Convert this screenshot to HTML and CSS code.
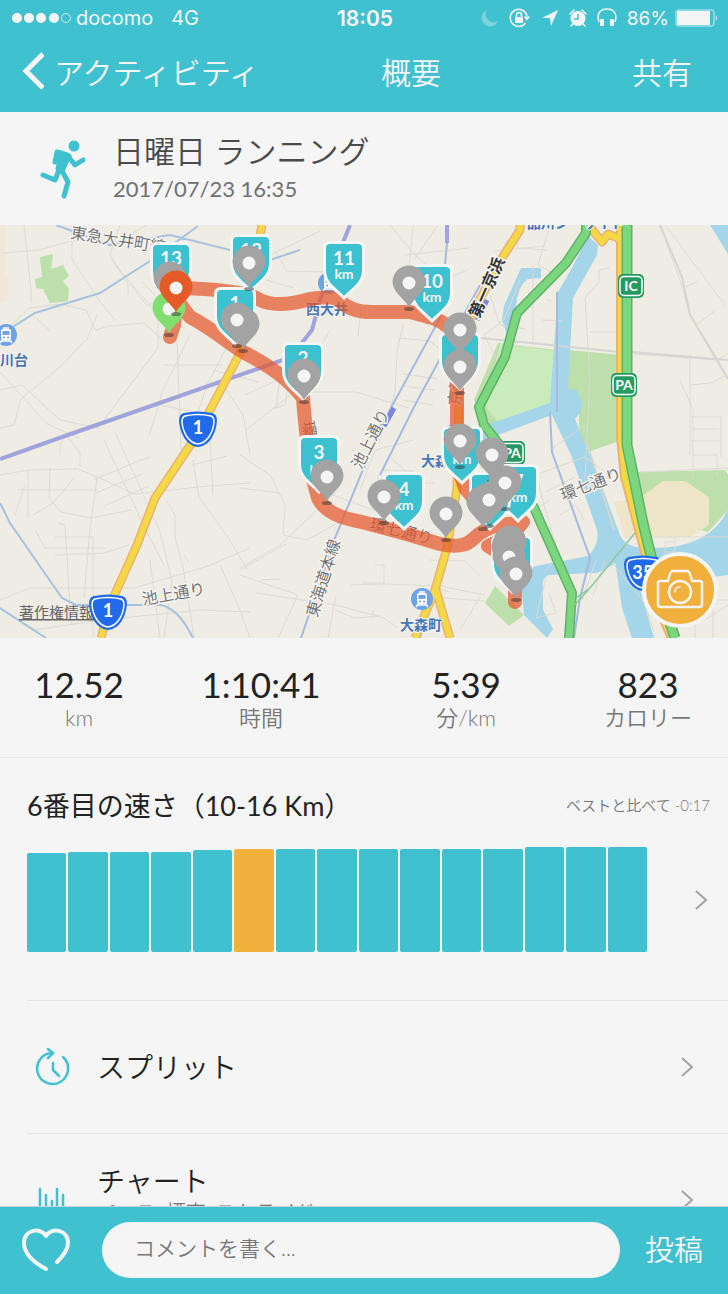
FILE: index.html
```html
<!DOCTYPE html>
<html lang="ja">
<head>
  <meta charset="UTF-8">
  <meta name="viewport" content="width=device-width, initial-scale=1.0">
  <title>概要</title>
  <link rel="stylesheet" href="styles.css">
</head>
<body>
  <div class="app">
    <header class="top">
      <div class="status">
        <div class="status-left">
          <svg width="60" height="12" viewBox="0 0 60 12" fill="#f5f5f5">
            <circle cx="5" cy="6" r="5"/><circle cx="17" cy="6" r="5"/><circle cx="29" cy="6" r="5"/><circle cx="42" cy="6" r="5"/>
            <circle cx="54" cy="6" r="4.5" fill="none" stroke="#c8ecf0" stroke-width="1"/>
          </svg>
          <span class="carrier">docomo</span>
          <span>4G</span>
        </div>
        <div class="clock">18:05</div>
        <div class="status-right">
          <svg width="18" height="18" viewBox="0 0 18 18"><path d="M6 1A8.500 8.500 0 1 0 17 12A8 8 0 0 1 6 1Z" fill="#79d3dd"/></svg>
          <svg width="22" height="20" viewBox="0 0 22 20" fill="none" stroke="#f5f5f5" stroke-width="1.500"><path d="M16.500 15A8.500 8.500 0 1 1 18 8"/><path d="M14.500 8.500h6.500l-3 4z" fill="#f5f5f5" stroke="none"/><rect x="6" y="9" width="8" height="6" rx="1" fill="#f5f5f5" stroke="none"/><path d="M7.500 9V7a2.500 2.500 0 0 1 5 0v2"/></svg>
          <svg width="18" height="18" viewBox="0 0 18 18"><path d="M1 9L17 1L10 17L9 9Z" fill="#f5f5f5"/></svg>
          <svg width="18" height="18" viewBox="0 0 18 18"><circle cx="9" cy="9.500" r="7.500" fill="#f5f5f5"/><path d="M9 5v5H5" fill="none" stroke="#40c1d0" stroke-width="1.500"/><path d="M1 5l4-4M17 5l-4-4M4 15l-2 2M14 15l2 2" stroke="#f5f5f5" stroke-width="1.500" stroke-linecap="round"/></svg>
          <svg width="20" height="20" viewBox="0 0 20 20"><path d="M2 14C-1 5 4 1 10 1S21 5 18 14" fill="none" stroke="#f5f5f5" stroke-width="1.600"/><rect x="3" y="11" width="4" height="7" rx="1" fill="#f5f5f5"/><rect x="13" y="11" width="4" height="7" rx="1" fill="#f5f5f5"/></svg>
          <span class="percent">86%</span>
          <svg class="battery" width="43" height="18" viewBox="0 0 43 18"><rect x="1" y="1" width="38" height="16" rx="3" fill="none" stroke="#9bdfe6" stroke-width="1.500"/><rect x="2" y="2" width="33" height="14" rx="1" fill="#f5f5f5"/><path d="M41 6q2 3 0 6z" fill="#f5f5f5"/></svg>
        </div>
      </div>
      <nav class="nav">
        <a class="back" href="#">
          <svg width="24" height="38" viewBox="0 0 24 38"><path d="M23 2L6 19L23 36" fill="none" stroke="#f5f5f5" stroke-width="5"/></svg>
          アクティビティ
        </a>
        <h1>概要</h1>
        <a class="share" href="#">共有</a>
      </nav>
    </header>

    <main class="content">
      <section class="summary">
        <svg class="runner" width="48" height="60" viewBox="0 0 48 60" fill="none" stroke="#40c1d0" stroke-linecap="round" stroke-linejoin="round">
          <circle cx="34" cy="7" r="5.500" fill="#40c1d0" stroke="none"/>
          <path d="M21 14l8 3l-7 15l-4-2z" fill="#40c1d0" stroke-width="5"/>
          <path d="M15 23l2-10l10 3l8 10l8-5" stroke-width="5"/>
          <path d="M19 31l-4 10l-12-5M22 32l6 11l-4 14" stroke-width="5"/>
        </svg>
        <div>
          <h2>日曜日 ランニング</h2>
          <time datetime="2017-07-23T16:35">2017/07/23 16:35</time>
        </div>
      </section>

      <section class="map">
        <svg class="map-canvas" viewBox="0 225 728 413" preserveAspectRatio="xMidYMid slice">
          <defs>
            <g id="pin">
              <ellipse cx="0" cy="26" rx="5" ry="2" fill="#333" opacity=".5"/>
              <path d="M0 24C-5 15 -16.500 9 -16.500 -1A16.500 16.500 0 0 1 16.500 -1C16.500 9 5 15 0 24Z"/>
              <circle r="6.500" fill="#f5f5f5"/>
            </g>
            <path id="flag" d="M-19.500 -49Q-19.500 -54.500 -14 -54.500H14Q19.500 -54.500 19.500 -49V-27C19.500 -13 8 -8 0 1C-8 -8 -19.500 -13 -19.500 -27Z" fill="#3bc1d0" stroke="#f5f5f5" stroke-width="3"/>
            <g id="train">
              <circle r="11" fill="#6fa3e6"/>
              <path d="M-3 -7h6M-6 8l3-4M6 8l-3-4M-4 6h8" stroke="#fff" stroke-width="1.500"/>
              <rect x="-5" y="-6" width="10" height="11" rx="2" fill="#fff"/>
              <rect x="-3.500" y="-4" width="7" height="4" fill="#6fa3e6"/>
              <path d="M-3 2.500h2M1 2.500h2" stroke="#6fa3e6" stroke-width="1.500"/>
            </g>
            <g id="route-shield">
              <path d="M-14 -15Q0 -18 14 -15Q18 -14 18 -8C17 4 11 16 0 17C-11 16 -17 4 -18 -8Q-18 -14 -14 -15Z" fill="#216bea" stroke="#216bea" stroke-width="2"/>
              <path d="M-13 -13Q0 -16 13 -13Q16 -12 16 -7C15 4 9 14 0 15C-9 14 -15 4 -16 -7Q-16 -12 -13 -13Z" fill="none" stroke="#fff" stroke-width="1.500"/>
            </g>
            <g id="road-sign">
              <rect x="-13" y="-12" width="26" height="24" rx="5" fill="#249b62"/>
              <rect x="-11" y="-9.500" width="22" height="19" rx="4" fill="none" stroke="#fff" stroke-width="1.500"/>
            </g>
          </defs>

          <rect y="225" width="728" height="413" fill="#efece4"/>
          <path d="M0 225h5v50l3 5v20l-8 3z" fill="#f3e5d8"/>

          <!-- parks -->
          <g fill="#bcdfab">
            <path d="M40 257l13-3l-2 15l12-4l6 11l-6 5l6 8l-1 12l-18 2l-7-14l-7-1l-1-9l7-2z"/>
            <path d="M498 343L556 350L553 404L490 425L474 400Z"/>
            <path d="M568 350L622 355V440L588 452L604 490L598 492L579 440V412L582 403L568 389Z"/>
            <path d="M636 472l89-2l3 5v35l-20 22l-20-5l-50-30z"/>
            <path d="M495 586l29 29l-15 11l-24-23z"/>
          </g>
          <path d="M500 344l56 7l-3 53l-55 18l-12-15z" fill="#caebbb"/>
          <path d="M614 502l27-5l22-16h22l24 16v28l-18 12h-66z" fill="#efe5c9"/>

          <!-- water -->
          <g fill="#a5d5e9">
            <path d="M588 236L598 245L597 255L573 298L569 370L568 389L577 390L582 403L581 412L575 419L598 476L620 535Q625 548 648 548Q708 550 728 510V575L655 585L620 560Q598 575 592 573L549 575Q541 578 543 588V610L553 629L547 638L524 615L520 570L536 566L588 556Q600 545 597 530L571 455L552 415L490 438L486 425L550 403L558 292L572 268Z"/>
            <path d="M521 268h20v10l-13 1Q518 285 516 306L507 335L502 320L504 306Z"/>
            <path d="M710 225h18v29zM615 560l18 0l10 40l11 38h-22l-10-30zM484 425h8l-8 30l-8 10z"/>
          </g>

          <!-- minor roads -->
          <g fill="none" stroke="#dcdad4" stroke-width="1">
            <path d="M24 225l7 65v13M3 253l36-3l36-10M72 225v34l28 43l15 18M75 240l40 2l32-17M0 335l30-27l30-4l26 6l9 20l15-4l34-3l22 20M37 318l14 14M0 390l22-5l38 35l38 8l60-80v-30M0 428l14-3l7-26M21 399l39-32l27-28l10-24M0 372l47 52l32 14"/>
            <path d="M120 225l-10 29l11 18l44 50M110 257l18 26v12M130 284l17 22l12-6l-16-18M190 335l-27 55l-14 46M177 340l4 110M163 365h60M155 404l50 10M223 385l20 30l7 40M213 370l45 12M104 440l42 90l18 35M115 432l45 100l12 50l-8 56M93 480l48-20l10-3M96 493l46-19M104 506l45-20M60 455v-10l6-10l14 18v14"/>
            <path d="M0 475l28-5l50-1l24 10l32 15l74-8l42-3M18 490h80M25 485l-10 30M28 470v48M50 468l-1 30l12 14l30 6l40-8M97 478l-7 50l-6 70M33 515l20-12l20-24M35 530l10 18h60M55 537h38v100M58 523l7 2l6 100M55 555l49-2l25-8M0 600l30-12h104l74-22l42-18M33 630l68-10l100-10l50 2M150 560l10 78M166 500l9 15v22l8 30l11 71M184 555l5 8"/>
            <path d="M240 310l-15 40l-18 35l-10 30M193 460l6 37l30 42l18 30M210 440l3 55M192 465l35-9M220 565l20 45l10 28M250 240l20 15l50-24M275 251l12 20l38 1M270 255l-4 25l28 8M245 395l35-16l-4 28M270 410l15-5l4-25M246 430l48-38h62l53 16M330 330l-20 35l-10 25M361 308l-3 28M390 225l23 28l30 27l25-10M413 225l-4 45l30 3M438 225l-24 35M405 255l65-7M495 251l50-5M495 272l12-32M550 225l-12 40l22 12M450 265l-13 52M403 326l-6 25l-2 42l-16 50M398 338l32 3l24 20M403 374l35 5M403 386l31 4M403 400l30 5"/>
            <path d="M240 455l30 20l15 30l-2 30l24 5l36-20M240 488l40 5M240 568l40-23l58-55M240 570l46-26M308 475l25 20l54 20M360 490l15-40l38-10M382 470l32 1M378 475l2 30M391 458l28 25l15 0M380 480l33 1M375 565h9v18h-22M351 585l35-1l47 2l16 6M240 575l58 20l-20 43M260 580l20-1M256 593l80 12l48 13l14 10M336 595l-8 43M335 610l19 8l26-2M373 610v8M430 560l35 1l15 15M435 585l50 10M430 597l55 4M460 630l20-33M500 365l-16-30l20-15l16-40M520 225l-3 23l30 2M533 265v80M490 295l10 30l26 4M547 300l5 1M542 320l20 1"/>
            <path d="M609 268l-10 2v12l-14 16l5 80l-5 100M618 225v45M590 332h30M660 225l20 55l10 35l25 40l13 24M665 225l60 80M685 287l12-5M695 325l20-14M634 354l82 6l12-6M690 355v100M691 385l20-2l15-8M680 380l13 30v70M691 417h30v40M691 429h28M693 455h24v20M691 441h30M535 475l50-18l20 15M538 480l5 22l15 50l-14 22M545 492l30-15M560 515l16-10l8 15M535 510l15-10M550 450l35-25M596 560l-14 40M546 578l-10 40l20-5l-7-20M610 560l34 42l10 30M605 560l-12 35M640 472l88-4M625 537l103 0M675 537v15h-10v-10h10M695 602v36M690 600h38M713 590v48M705 620l23-15"/>
            <path d="M660 225l22 52l8 38l38 64M620 351l108 9M480 338l140 14M586 440l28 90" stroke="#d4d4d2" stroke-width="2"/>
          </g>

          <!-- railways and rivers -->
          <g fill="none">
            <path d="M56 225l54 20l60-10l100 25l30-10M0 335l35-22l65-20l50-32l48-35M0 503l10 20l52 75l14 7h85q18 4 32 33M0 608l46 30M75 605l30 3" stroke="#a6c2df" stroke-width="2"/>
            <path d="M0 459L65 436L283 360L300 345L312 330L320 300L350 225M447 225v18" stroke="#a0a4dc" stroke-width="4"/>
            <path d="M447 243l-7 75l-60 110l-45 110l-34 100M480 285l-65 120l-35 70M440 560l-20 78M550 412l2 40l38 106l-10 40l-6 40M557 292v120" stroke="#a6b9df" stroke-width="2"/>
            <path d="M394 408l-10 18M487 300l-10 20" stroke="#7b84e0" stroke-width="5"/>
          </g>

          <!-- main roads -->
          <g fill="none" stroke-linejoin="round">
            <g stroke="#ecb177" stroke-width="9">
              <path d="M262 225l-12 63l-10 65L197 435L155 498L137 545L110 605L101 638"/>
              <path d="M520 225v5l-18 28l-32 60l-10 40l-3 130l-10 60l-12 42l-20 48M436 590l14 48M590 227l12 15l6-8l17 7"/>
              <path d="M621 225v212l4 40l37 138l10 23" stroke-width="10"/>
            </g>
            <g stroke="#f4d844" stroke-width="6">
              <path d="M262 225l-12 63l-10 65L197 435L155 498L137 545L110 605L101 638"/>
              <path d="M520 225v5l-18 28l-32 60l-10 40l-3 130l-10 60l-12 42l-20 48M436 590l14 48M590 227l12 15l6-8l17 7"/>
              <path d="M621 225v212l4 40l37 138l10 23"/>
            </g>
            <g stroke="#5db269" stroke-width="10">
              <path d="M586 225v8l-20 30l-49 50l-12 44l-26 50l5 18l30 38l58 130l-3 45"/>
              <path d="M627 225v220l16 78l17 70l15 45" stroke-width="11"/>
            </g>
            <g stroke="#7bd67d" stroke-width="7">
              <path d="M586 225v8l-20 30l-49 50l-12 44l-26 50l5 18l30 38l58 130l-3 45"/>
              <path d="M627 225v220l16 78l17 70l15 45" stroke-width="8"/>
            </g>
            <path d="M635 533l-45 55l-14 10M575 605l14-16" stroke="#8bcb9c" stroke-width="1.500"/>
          </g>

          <!-- place names -->
          <g class="map-label">
            <text transform="translate(70 238) rotate(9)">東急大井町線</text>
            <text transform="translate(143 605) rotate(-10)">池上通り</text>
            <text transform="translate(361 470) rotate(-63)">池上通り</text>
            <text transform="translate(317 618) rotate(-73)">東海道本線</text>
            <text transform="translate(563 501) rotate(-21)">環七通り</text>
            <text transform="translate(369 529) rotate(14)">環七通り</text>
            <text transform="translate(302 422) rotate(80)">環七</text>
            <text transform="translate(460 406) rotate(-85)">京浜</text>
            <text class="strong" transform="translate(479 319) rotate(-66)">第一京浜</text>
          </g>
          <g class="map-station">
            <text x="0" y="365">川台</text>
            <text x="306" y="314">西大井</text>
            <text x="421" y="466">大森</text>
            <text x="400" y="630">大森町</text>
            <text x="527" y="228">品川シーサイド</text>
          </g>
          <use href="#train" x="6" y="335"/>
          <use href="#train" x="329" y="283"/>
          <use href="#train" x="422" y="599"/>
          <use href="#train" x="452" y="436"/>
          <text class="credit" x="19" y="618">著作権情報</text>

          <g class="sign-text">
            <use href="#route-shield" x="198" y="429"/><text x="198" y="434">1</text>
            <use href="#route-shield" x="108" y="612"/><text x="108" y="617">1</text>
            <use href="#route-shield" x="643" y="573"/><text x="648" y="579">357</text>
            <use href="#road-sign" x="631" y="286"/><text x="631" y="291" class="small">IC</text>
            <use href="#road-sign" x="624" y="385"/><text x="624" y="390" class="small">PA</text>
            <use href="#road-sign" x="512" y="453"/><text x="512" y="458" class="small">PA</text>
          </g>

          <!-- run route -->
          <path class="route" d="M170 337L174 325L177 300L190 317C215 330 230 345 245 353C270 366 290 380 303 398Q304 412 306 430L309 465L318 498C325 512 340 518 362 522L410 535L440 544Q462 549 472 540Q485 527 500 525L523 522L512 535L488 546L515 562V602M492 525L475 500L465 488L457 465V335Q443 319 425 316L410 312H375Q352 313 340 301Q332 295 310 299Q276 309 258 299Q245 290 180 288"/>

          <g class="km">
            <g transform="translate(171 298)"><use href="#flag"/><text y="-33">13</text></g>
            <g transform="translate(251 290)"><use href="#flag"/><text y="-33">12</text></g>
            <g transform="translate(235 343)"><use href="#flag"/><text y="-33">1</text></g>
            <g transform="translate(303 398)"><use href="#flag"/><text y="-33">2</text></g>
            <g transform="translate(319 491)"><use href="#flag"/><text y="-32">3</text><text y="-16" class="unit">km</text></g>
            <g transform="translate(404 528)"><use href="#flag"/><text y="-32">4</text><text y="-18" class="unit">km</text></g>
            <g transform="translate(344 297)"><use href="#flag"/><text y="-32">11</text><text y="-18" class="unit">km</text></g>
            <g transform="translate(432 320)"><use href="#flag"/><text y="-32">10</text><text y="-18" class="unit">km</text></g>
            <g transform="translate(460 388)"><use href="#flag"/></g>
            <g transform="translate(462 482)"><use href="#flag"/><text y="-18" class="unit">km</text></g>
            <g transform="translate(518 520)"><use href="#flag"/><text y="-32">7</text><text y="-18" class="unit">km</text></g>
            <g transform="translate(490 528)"><use href="#flag"/><text y="-32">5</text></g>
            <g transform="translate(512 591)"><use href="#flag"/></g>
          </g>

          <g fill="#a3a3a3">
            <use href="#pin" x="170" y="279"/>
            <use href="#pin" x="249" y="263"/>
            <use href="#pin" x="243" y="325"/>
            <use href="#pin" x="237" y="320"/>
            <use href="#pin" x="304" y="376"/>
            <use href="#pin" x="327" y="477"/>
            <use href="#pin" x="384" y="497"/>
            <use href="#pin" x="446" y="514"/>
            <use href="#pin" x="409" y="283"/>
            <use href="#pin" x="460" y="330"/>
            <use href="#pin" x="460" y="367"/>
            <use href="#pin" x="460" y="441"/>
            <use href="#pin" x="492" y="455"/>
            <use href="#pin" x="505" y="483"/>
            <use href="#pin" x="483" y="503"/>
            <use href="#pin" x="489" y="500"/>
            <use href="#pin" x="508" y="548"/>
            <use href="#pin" x="510" y="543"/>
            <circle cx="509" cy="546" r="14"/>
            <use href="#pin" x="509" y="557"/>
            <use href="#pin" x="516" y="574"/>
          </g>
          <use href="#pin" x="169" y="309" fill="#80df70"/>
          <use href="#pin" x="176" y="288" fill="#e55a26"/>
        </svg>
        <button class="camera" type="button" aria-label="写真">
          <svg width="48" height="42" viewBox="0 0 48 42" fill="none" stroke="#f5f5f5" stroke-width="2.500" stroke-linejoin="round" stroke-linecap="round">
            <path d="M4 12h8q2-9 4-10h16q2 1 4 10h8q2 0 2 2v22q0 2-3 2H5q-3 0-3-2V14q0-2 2-2z"/>
            <circle cx="24" cy="23" r="11"/><path d="M19 23q0-5 5-5" stroke-width="1.500"/>
          </svg>
        </button>
      </section>

      <section class="stats">
        <div><strong>12.52</strong><span>km</span></div>
        <div><strong>1:10:41</strong><span>時間</span></div>
        <div><strong>5:39</strong><span>分/km</span></div>
        <div><strong>823</strong><span>カロリー</span></div>
      </section>

      <section class="speed">
        <div class="speed-head">
          <h3>6番目の速さ（10-16 Km）</h3>
          <span>ベストと比べて -0:17</span>
        </div>
        <a class="speed-body" href="#" aria-label="速さの詳細">
          <div class="bars">
            <i style="height: 94%"></i>
            <i style="height: 95%"></i>
            <i style="height: 95%"></i>
            <i style="height: 95%"></i>
            <i style="height: 97%"></i>
            <i class="current" style="height: 98%"></i>
            <i style="height: 98%"></i>
            <i style="height: 98%"></i>
            <i style="height: 98%"></i>
            <i style="height: 98%"></i>
            <i style="height: 98%"></i>
            <i style="height: 98%"></i>
            <i style="height: 100%"></i>
            <i style="height: 100%"></i>
            <i style="height: 100%"></i>
          </div>
          <svg class="chevron" width="14" height="22" viewBox="0 0 14 22"><path d="M2 2L12 11L2 20"/></svg>
        </a>
      </section>

      <a class="row" href="#">
        <svg class="row-icon" width="36" height="38" viewBox="0 0 36 38" fill="none" stroke="#40c1d0" stroke-width="2.500" stroke-linecap="round" stroke-linejoin="round">
          <path d="M28 9A15.500 15.500 0 1 1 18 5M13 1l5 4l-5 5M18 15v7l6 6"/>
        </svg>
        <span class="row-text">スプリット</span>
        <svg class="chevron" width="14" height="22" viewBox="0 0 14 22"><path d="M2 2L12 11L2 20"/></svg>
      </a>
      <a class="row" href="#">
        <svg class="row-icon" width="36" height="38" viewBox="0 0 36 38" fill="none" stroke="#40c1d0" stroke-width="2.500" stroke-linecap="round">
          <path d="M5 8v26M11 14v20M17 20v14M22 8v26M28 14v20"/>
        </svg>
        <span class="row-text with-note">チャート<small>ペース, 標高, ストライド</small></span>
        <svg class="chevron" width="14" height="22" viewBox="0 0 14 22"><path d="M2 2L12 11L2 20"/></svg>
      </a>
    </main>

    <footer class="comment">
      <button class="like" type="button" aria-label="いいね">
        <svg width="50" height="46" viewBox="0 0 50 46"><path d="M25 42C12 35 3 26 3 16C3 2 20 0 25 9C30 0 47 2 47 16C47 23 42 29 36 35" fill="none" stroke="#f5f5f5" stroke-width="4" stroke-linecap="round" stroke-linejoin="round"/></svg>
      </button>
      <input type="text" placeholder="コメントを書く..." aria-label="コメントを書く">
      <button class="post" type="button">投稿</button>
    </footer>
  </div>
</body>
</html>
```

FILE: styles.css
```css
* {
  box-sizing: border-box;
}
body {
  margin: 0;
  font-family: Lato, "Noto Sans CJK JP", sans-serif;
  font-weight: 350;
  background: #f5f5f5;
  color: #222;
}
h1, h2, h3 {
  margin: 0;
  font-weight: 350;
}
a {
  color: inherit;
  text-decoration: none;
}
button {
  padding: 0;
  border: none;
  background: none;
  color: inherit;
  font: inherit;
  cursor: pointer;
}
svg {
  display: block;
}
.app {
  display: flex;
  flex-direction: column;
  height: 100vh;
}

/* header */
.top {
  flex: none;
  background: #40c1d0;
  color: #f5f5f5;
}
.status {
  display: grid;
  grid-template-columns: 1fr auto 1fr;
  align-items: center;
  height: 36px;
  padding: 0 10px 0 12px;
  font-family: Inter, sans-serif;
  font-size: 20px;
  font-weight: 400;
}
.status-left, .status-right {
  display: flex;
  align-items: center;
}
.carrier {
  margin: 0 18px 0 4px;
}
.clock {
  font-size: 21px;
  font-weight: 600;
}
.status-right {
  justify-content: flex-end;
  gap: 10px;
}
.percent {
  font-size: 19px;
}
.battery {
  margin-left: -4px;
}
.nav {
  display: grid;
  grid-template-columns: 1fr auto 1fr;
  align-items: center;
  height: 76px;
  padding: 0 36px 6px 20px;
  font-size: 30px;
}
.nav h1 {
  font-size: 30px;
  padding-left: 110px;
}
.back {
  display: flex;
  align-items: center;
  gap: 10px;
  white-space: nowrap;
}
.share {
  text-align: right;
}

/* activity */
.content {
  flex: 1;
  min-height: 0;
  overflow-y: auto;
  scrollbar-width: none;
}
.summary {
  display: flex;
  align-items: center;
  gap: 25px;
  height: 113px;
  padding-left: 40px;
  color: #4a4a4a;
}
.summary h2 {
  font-size: 31px;
  line-height: 40px;
}
.summary time {
  display: block;
  font-size: 22px;
  font-weight: 400;
  line-height: 36px;
  color: #707070;
}
.map {
  position: relative;
}
.map-canvas {
  width: 100%;
  aspect-ratio: 728 / 413;
}
.map-label {
  font-size: 16px;
  fill: #6c6c70;
  stroke: #f5f3ee;
  stroke-width: 3px;
  paint-order: stroke;
}
.map-label .strong {
  fill: #333;
  font-weight: 700;
}
.map-station {
  font-size: 14px;
  font-weight: 700;
  fill: #4775b5;
  stroke: #f5f3ee;
  stroke-width: 2px;
  paint-order: stroke;
}
.credit {
  font-size: 15px;
  font-weight: 400;
  fill: #666;
  text-decoration: underline;
}
.sign-text {
  font-size: 18px;
  font-weight: 700;
  text-anchor: middle;
  fill: #fff;
}
.sign-text .small {
  font-size: 14px;
}
.route {
  fill: none;
  stroke: #e4582c;
  stroke-opacity: .72;
  stroke-width: 14px;
  stroke-linecap: round;
  stroke-linejoin: round;
}
.km {
  font-size: 19px;
  font-weight: 700;
  text-anchor: middle;
  fill: #f5f5f5;
}
.km .unit {
  font-size: 14px;
}
.camera {
  position: absolute;
  right: 10px;
  bottom: 10px;
  display: flex;
  align-items: center;
  justify-content: center;
  width: 76px;
  height: 76px;
  border: 4px solid #f5f5f5;
  border-radius: 50%;
  background: #f1af3c;
}

.stats {
  display: grid;
  grid-template-columns: 158fr 206fr 204fr 160fr;
  height: 120px;
  padding-top: 26px;
  border-bottom: 1px solid #ebebeb;
  text-align: center;
}
.stats strong {
  display: block;
  font-size: 35px;
  font-weight: 400;
  line-height: 40px;
}
.stats span {
  font-size: 22px;
  line-height: 28px;
  color: #777;
}

.speed {
  height: 242px;
  padding: 28px 18px 0 27px;
}
.speed-head {
  display: flex;
  align-items: center;
  justify-content: space-between;
  height: 36px;
}
.speed-head h3 {
  font-size: 27px;
  font-weight: 400;
}
.speed-head span {
  font-size: 15px;
  color: #777;
}
.speed-body {
  display: flex;
  align-items: center;
  justify-content: space-between;
  margin: 25px 2px 0 0;
}
.bars {
  display: flex;
  flex: 1;
  align-items: flex-end;
  gap: 2px;
  height: 105px;
  margin-right: 47px;
}
.bars i {
  flex: 1;
  border-radius: 2px;
  background: #40c1d0;
}
.bars .current {
  background: #f1af3c;
}
.chevron {
  flex: none;
  fill: none;
  stroke: #a3a3a3;
  stroke-width: 2px;
}

.row {
  display: flex;
  align-items: center;
  height: 133px;
  margin-left: 27px;
  padding: 0 34px 0 8px;
  border-top: 1px solid #e6e6e6;
}
.row-text {
  flex: 1;
  margin-left: 26px;
  font-size: 28px;
  line-height: 36px;
}
.with-note {
  padding-bottom: 12px;
}
.row-text small {
  display: block;
  font-size: 20px;
  line-height: 26px;
  color: #777;
}

/* comment bar */
.comment {
  flex: none;
  display: flex;
  align-items: center;
  height: 88px;
  padding: 0 25px 2px 21px;
  border-top: 1px solid #c5d5d7;
  background: #40c1d0;
  color: #f5f5f5;
}
.comment input {
  flex: 1;
  min-width: 0;
  height: 56px;
  margin: 0 25px 0 31px;
  padding: 0 32px 4px;
  border: none;
  border-radius: 28px;
  background: #f5f5f5;
  color: #333;
  font: inherit;
  font-size: 21px;
}
.comment input::placeholder {
  color: #777;
}
.post {
  padding-bottom: 4px;
  font-size: 29px;
}
```
